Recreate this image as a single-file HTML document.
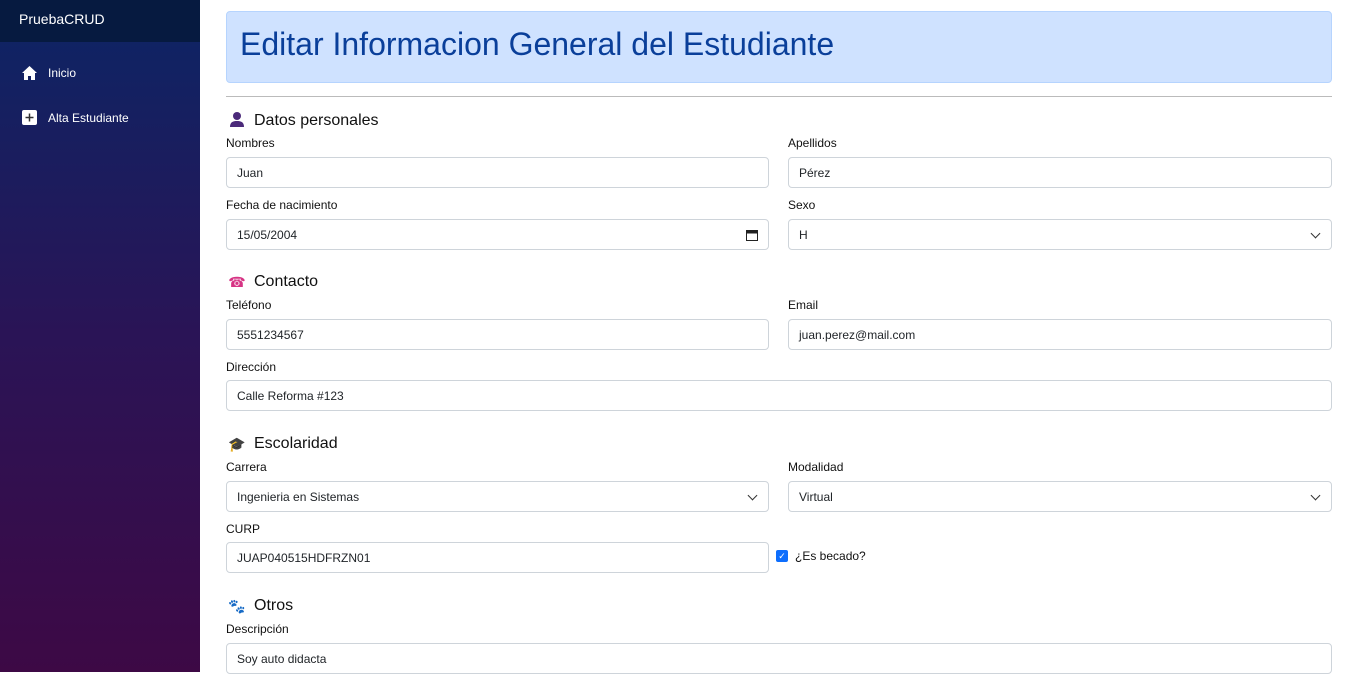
<!DOCTYPE html>
<html><head><meta charset="utf-8"><style>
*{box-sizing:border-box;margin:0;padding:0}
body{width:1348px;height:672px;overflow:hidden;font-family:"Liberation Sans",Arial,sans-serif;background:#fff;position:relative;color:#212529}
.side{position:absolute;left:0;top:0;width:200px;height:672px;background:linear-gradient(180deg,#0c2565 0%,#2a1456 50%,#3d0945 100%)}
.brand{height:42px;background:#061a40;color:#fff;font-size:14px;padding:11px 0 0 19px}
.nav{position:absolute;left:22px;color:#fff;font-size:12px;display:flex;align-items:center}
.nav span{margin-left:11px}
.hdr{position:absolute;left:226px;top:11px;width:1106px;height:72px;background:#cfe2ff;border:1px solid #b6d4fe;border-radius:4px;color:#0a3f9a;font-size:32px;padding:14px 0 0 13px}
hr{position:absolute;left:226px;top:96px;width:1106px;border:0;border-top:1px solid #bbb}
.h{position:absolute;font-size:16px;color:#111;display:flex;align-items:center}
.h i{display:inline-block;width:18px;margin-right:8px;font-style:normal;font-size:14px;text-align:center}
.l{position:absolute;font-size:12px;color:#111}
.in{position:absolute;height:31px;border:1px solid #ced4da;border-radius:4px;font-size:12px;padding:8px 0 0 10px;color:#212529;background:#fff}
.a{left:226px;width:543px}.b{left:788px;width:544px}.f{left:226px;width:1106px}
.chev{position:absolute;right:12px;top:10px;width:7px;height:7px;border-right:1.5px solid #333;border-bottom:1.5px solid #333;transform:rotate(45deg)}
</style></head><body>
<div class="side">
<div class="brand">PruebaCRUD</div>
<div class="nav" style="top:66px"><svg width="15" height="14" viewBox="0 0 15 14"><path d="M7.5 0L0 7h2v7h4v-4h3v4h4V7h2z" fill="#fff"/></svg><span>Inicio</span></div>
<div class="nav" style="top:110px"><svg width="15" height="15" viewBox="0 0 15 15"><rect width="15" height="15" rx="2" fill="#fff"/><path d="M7.5 3.5v8M3.5 7.5h8" stroke="#333" stroke-width="1.5"/></svg><span>Alta Estudiante</span></div>
</div>
<div class="hdr">Editar Informacion General del Estudiante</div>
<hr>
<div class="h" style="left:228px;top:111px"><i><svg width="16" height="16" viewBox="0 0 16 16"><circle cx="8" cy="5" r="4" fill="#4b2a7a"/><path d="M1 16c0-5 3-6 7-6s7 1 7 6z" fill="#4b2a7a"/></svg></i>Datos personales</div>
<div class="l" style="left:226px;top:136px">Nombres</div><div class="l" style="left:788px;top:136px">Apellidos</div>
<div class="in a" style="top:157px">Juan</div><div class="in b" style="top:157px">Pérez</div>
<div class="l" style="left:226px;top:198px">Fecha de nacimiento</div><div class="l" style="left:788px;top:198px">Sexo</div>
<div class="in a" style="top:219px">15/05/2004<svg style="position:absolute;right:10px;top:9px" width="12" height="12" viewBox="0 0 12 12"><rect x="0.5" y="1.5" width="11" height="10" fill="none" stroke="#222"/><rect x="0.5" y="1.5" width="11" height="3" fill="#222"/></svg></div>
<div class="in b" style="top:219px">H<div class="chev"></div></div>
<div class="h" style="left:228px;top:273px"><i style="color:#d63384">&#9742;</i>Contacto</div>
<div class="l" style="left:226px;top:298px">Teléfono</div><div class="l" style="left:788px;top:298px">Email</div>
<div class="in a" style="top:319px">5551234567</div><div class="in b" style="top:319px">juan.perez@mail.com</div>
<div class="l" style="left:226px;top:360px">Dirección</div>
<div class="in f" style="top:380px">Calle Reforma #123</div>
<div class="h" style="left:228px;top:435px"><i>&#127891;</i>Escolaridad</div>
<div class="l" style="left:226px;top:460px">Carrera</div><div class="l" style="left:788px;top:460px">Modalidad</div>
<div class="in a" style="top:481px">Ingenieria en Sistemas<div class="chev"></div></div>
<div class="in b" style="top:481px">Virtual<div class="chev"></div></div>
<div class="l" style="left:226px;top:522px">CURP</div>
<div class="in a" style="top:542px">JUAP040515HDFRZN01</div>
<div class="l" style="left:776px;top:549px;display:flex;align-items:center"><span style="display:inline-block;width:12px;height:12px;background:#0d6efd;border-radius:2px;color:#fff;font-size:9px;text-align:center;line-height:12px;margin-right:7px">&#10003;</span>¿Es becado?</div>
<div class="h" style="left:228px;top:597px"><i>&#128062;</i>Otros</div>
<div class="l" style="left:226px;top:622px">Descripción</div>
<div class="in f" style="top:643px">Soy auto didacta</div>
</body></html>
